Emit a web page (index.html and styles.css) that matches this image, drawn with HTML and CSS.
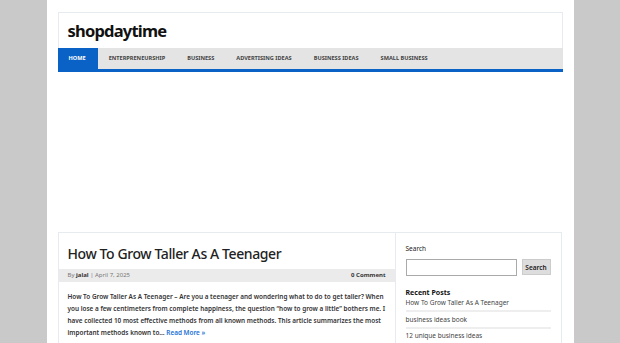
FILE: index.html
```html
<!DOCTYPE html>
<html lang="en">
<head>
    <meta charset="UTF-8">
    <meta name="viewport" content="width=device-width, initial-scale=1.0">
    <title>shopdaytime</title>
    <link rel="stylesheet" href="styles.css">
</head>
<body>
    <div class="page">
        <div class="header">
            <div class="brand">shopdaytime</div>
            <ul class="nav">
                <li class="active">Home</li>
                <li>Enterpreneurship</li>
                <li>Business</li>
                <li>Advertising Ideas</li>
                <li>Business Ideas</li>
                <li>Small Business</li>
            </ul>
        </div>

        <div class="ad"></div>

        <div class="main">
            <div class="content">
                <h1 class="title">How To Grow Taller As A Teenager</h1>
                <div class="meta">
                    <span>By <b>jalal</b> | April 7, 2025</span>
                    <b>0 Comment</b>
                </div>
                <p class="excerpt">How To Grow Taller As A Teenager – Are you a teenager and wondering what to do to get taller? When you lose a few centimeters from complete happiness, the question “how to grow a little” bothers me. I have collected 10 most effective methods from all known methods. This article summarizes the most important methods known to… <a href="#" class="more">Read More »</a></p>
            </div>
            <div class="sidebar">
                <div class="label">Search</div>
                <form class="search">
                    <input type="text" class="search-input">
                    <button type="button" class="search-btn">Search</button>
                </form>
                <h3 class="widget-title">Recent Posts</h3>
                <ul class="recent">
                    <li>How To Grow Taller As A Teenager</li>
                    <li>business ideas book</li>
                    <li>12 unique business ideas</li>
                </ul>
            </div>
        </div>
    </div>
</body>
</html>
```

FILE: styles.css
```css
body {
    margin: 0;
    background-color: #c9c9c9;
    font-family: "Noto Sans", "DejaVu Sans", sans-serif;
    color: #333;
}
.page {
    width: 505px;
    height: 331px;
    overflow: hidden;
    margin: 0 auto;
    padding: 12px 11px 0;
    background-color: #fff;
}
.header {
    border: 1px solid #e6ebf0;
    border-bottom: none;
}
.brand {
    height: 35px;
    line-height: 36px;
    padding-left: 9px;
    font-size: 16.5px;
    font-weight: bold;
    color: #111;
    letter-spacing: -0.8px;
}
.nav {
    display: flex;
    margin: 0 -1px;
    padding: 0;
    list-style: none;
    height: 21px;
    background-color: #e4e4e4;
    border-bottom: 3px solid #0b62c6;
}
.nav li {
    padding: 0 11px;
    line-height: 21px;
    font-size: 5.6px;
    font-weight: bold;
    text-transform: uppercase;
    color: #444;
}
.nav li.active {
    padding: 0 12px 0 11px;
    background-color: #0b62c6;
    color: #fff;
}
.ad {
    height: 160px;
}
.main {
    display: flex;
}
.content {
    width: 336px;
    border: 1px solid #e6ebf0;
    border-bottom: none;
    height: 111px;
}
.title {
    margin: 11px 0 0;
    padding: 0 9px;
    font-size: 14px;
    line-height: 20px;
    font-weight: 500;
    letter-spacing: -0.4px;
    color: #222;
}
.meta {
    display: flex;
    justify-content: space-between;
    margin-top: 5px;
    padding: 0 9px;
    height: 13px;
    line-height: 13px;
    background-color: #ebebeb;
    font-size: 6px;
    color: #777;
}
.meta b {
    color: #333;
}
.excerpt {
    margin: 9px 0 0;
    padding: 0 4px 0 9px;
    font-size: 6.4px;
    line-height: 12px;
    font-weight: 600;
    color: #333;
}
.more {
    color: #1a72d6;
    text-decoration: none;
}
.sidebar {
    width: 145px;
    padding: 0 10px;
    border-top: 1px solid #e6ebf0;
    border-right: 1px solid #e6ebf0;
}
.label {
    margin-top: 11px;
    font-size: 6.5px;
    color: #222;
}
.search {
    display: flex;
    gap: 5px;
    margin-top: 6px;
}
.search-input {
    width: 107px;
    height: 13px;
    margin: 0;
    padding: 1px;
    border: 1px solid #aaa;
}
.search-btn {
    width: 29px;
    height: 16px;
    margin: 0;
    padding: 0;
    border: 1px solid #ccc;
    background-color: #ddd;
    font-family: inherit;
    font-size: 6.5px;
    font-weight: 600;
    color: #222;
}
.widget-title {
    margin: 12px 0 0;
    font-size: 7px;
    font-weight: bold;
    color: #111;
}
.recent {
    margin: 0;
    padding: 0;
    list-style: none;
}
.recent li {
    padding: 1px 0 3px;
    border-bottom: 2px solid #eee;
    margin-bottom: 1.5px;
    font-size: 6.5px;
    line-height: 9px;
    color: #444;
}
```
